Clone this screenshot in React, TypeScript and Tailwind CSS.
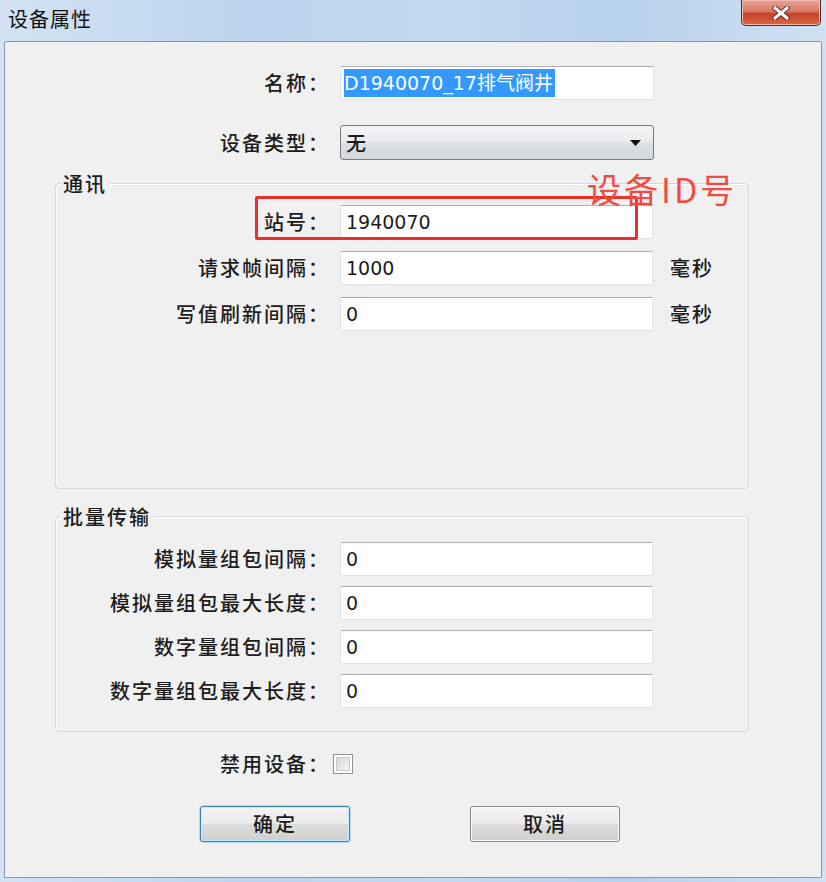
const cjk = "font-['Noto_Sans_CJK_SC',sans-serif]";
const val = "font-['DejaVu_Sans','Noto_Sans_CJK_SC',sans-serif]";

function Label({ text, width }: { text: string; width: string }) {
  return (
    <div className={`${width} shrink-0 text-right text-[20px] leading-[24px] tracking-[2px] font-medium text-[#1c1c1c] ${cjk}`}>
      {text}
    </div>
  );
}

function TextBox({ value, width = "w-[313px]" }: { value: string; width?: string }) {
  return (
    <div
      className={`${width} h-[34px] shrink-0 flex items-center rounded-[2px] border border-[#e0e4e9] border-t-[#abadb3] bg-white px-[5px] text-[19px] text-[#1c1c1c] ${val}`}
    >
      {value}
    </div>
  );
}

function Row({
  label,
  value,
  labelWidth,
  unit
}: {
  label: string;
  value: string;
  labelWidth: string;
  unit?: string;
}) {
  return (
    <div className="flex items-center">
      <Label text={label} width={labelWidth} />
      <div className="ml-[10px]">
        <TextBox value={value} />
      </div>
      {unit && (
        <div className={`ml-[17px] text-[20px] tracking-[2px] font-medium text-[#1c1c1c] ${cjk}`}>{unit}</div>
      )}
    </div>
  );
}

function GroupBox({
  title,
  height,
  className,
  children
}: {
  title: string;
  height: string;
  className: string;
  children: React.ReactNode;
}) {
  return (
    <div className={`relative ml-[50px] w-[694px] ${height} rounded-[4px] border border-[#d5d9dd] shadow-[inset_1px_1px_0_#ffffff] ${className}`}>
      <div className={`-mt-[10px] ml-[5px] w-fit bg-[#f0f0f0] px-[2px] text-[20px] leading-[20px] tracking-[2px] font-medium text-[#1c1c1c] ${cjk}`}>
        {title}
      </div>
      {children}
    </div>
  );
}

function Button({ text, primary }: { text: string; primary?: boolean }) {
  return (
    <div
      className={`flex h-[36px] w-[150px] items-center justify-center rounded-[3px] border bg-[linear-gradient(180deg,#f4f4f4_0%,#ebebeb_48%,#dddddd_52%,#cfcfcf_100%)] text-[20px] tracking-[2px] font-medium text-[#1c1c1c] ${cjk} ${
        primary ? "border-[#3c7fb1] shadow-[0_0_0_1px_#b7dcf3,inset_0_0_0_1px_#c8ecfb]" : "border-[#8a8a8a] shadow-[inset_0_0_0_1px_#fafafa]"
      }`}
    >
      {text}
    </div>
  );
}

export default function App() {
  return (
    <div className="flex h-[882px] w-[826px] flex-col bg-[linear-gradient(90deg,#d3e3f4_0%,#bcd4ee_30%,#c3d9f0_55%,#b7d0ec_75%,#d0e1f3_100%)]">
      <div className="flex h-[41px] shrink-0 items-start">
        <div className={`pl-[8px] pt-[7px] text-[20px] leading-[24px] tracking-[1px] text-[#111] ${cjk}`}>设备属性</div>
        <div className="ml-auto mr-[5px] flex h-[26px] w-[80px] items-center justify-center rounded-b-[5px] border border-t-0 border-[#5a2620] bg-[linear-gradient(180deg,#e6a595_0%,#d77a66_45%,#c5422c_55%,#d8693f_100%)] shadow-[inset_0_0_0_1px_#f0b8a8]">
          <svg width="18" height="14" viewBox="0 0 18 14">
            <path d="M3 2 L15 12 M15 2 L3 12" stroke="#6b2a20" strokeWidth="5" strokeLinecap="square" />
            <path d="M3 2 L15 12 M15 2 L3 12" stroke="#ffffff" strokeWidth="3" strokeLinecap="square" />
          </svg>
        </div>
      </div>

      <div className="mx-[4px] mb-[4px] flex flex-1 flex-col rounded-t-[2px] border border-[#8796aa] bg-[#f0f0f0] pt-[24px]">
        <div className="flex items-center">
          <Label text="名称：" width="w-[325px]" />
          <div
            className={`ml-[10px] flex h-[34px] w-[314px] items-center rounded-[2px] border border-[#e0e4e9] border-t-[#abadb3] bg-white px-[3px] text-[19px] ${val}`}
          >
            <span className="bg-[#3399ff] pr-[2px] text-white">D1940070_17排气阀井</span>
          </div>
        </div>

        <div className="mt-[25px] flex items-center">
          <Label text="设备类型：" width="w-[325px]" />
          <div className="ml-[10px] flex h-[35px] w-[314px] items-center rounded-[3px] border border-[#7a7a7a] bg-[linear-gradient(180deg,#f3f5f7_0%,#e9ecef_45%,#dde1e5_55%,#d2d7dc_100%)] pl-[5px] pr-[12px]">
            <span className={`text-[20px] font-medium text-[#1c1c1c] ${cjk}`}>无</span>
            <svg className="ml-auto" width="11" height="6" viewBox="0 0 11 6">
              <path d="M0 0 H11 L5.5 6 Z" fill="#111" />
            </svg>
          </div>
        </div>

        <GroupBox title="通讯" height="h-[306px]" className="mt-[23px]">
          <div className="mt-[11px] flex flex-col gap-[12px]">
            <Row label="站号：" value="1940070" labelWidth="w-[274px]" />
            <Row label="请求帧间隔：" value="1000" labelWidth="w-[274px]" unit="毫秒" />
            <Row label="写值刷新间隔：" value="0" labelWidth="w-[274px]" unit="毫秒" />
          </div>
          <div className="absolute left-[199px] top-[12px] h-[44px] w-[383px] rounded-[2px] border-[3px] border-[#e8302c]" />
          <div
            className={`absolute left-[531px] top-[-14px] text-[34px] leading-[38px] tracking-[3px] text-[#ef4d44] ${cjk}`}
          >
            设备ID号
          </div>
        </GroupBox>

        <GroupBox title="批量传输" height="h-[216px]" className="mt-[27px]">
          <div className="mt-[15px] flex flex-col gap-[10px]">
            <Row label="模拟量组包间隔：" value="0" labelWidth="w-[274px]" />
            <Row label="模拟量组包最大长度：" value="0" labelWidth="w-[274px]" />
            <Row label="数字量组包间隔：" value="0" labelWidth="w-[274px]" />
            <Row label="数字量组包最大长度：" value="0" labelWidth="w-[274px]" />
          </div>
        </GroupBox>

        <div className="mt-[20px] flex items-center">
          <Label text="禁用设备：" width="w-[325px]" />
          <div className="ml-[3px] flex h-[20px] w-[20px] items-center justify-center border border-[#8e8f8f] bg-white">
            <div className="h-[14px] w-[14px] border border-[#c8c8c8] bg-[linear-gradient(135deg,#d8d8d8_0%,#f4f4f4_100%)]" />
          </div>
        </div>

        <div className="ml-[195px] mt-[30px] flex gap-[120px]">
          <Button text="确定" primary />
          <Button text="取消" />
        </div>
      </div>
    </div>
  );
}
